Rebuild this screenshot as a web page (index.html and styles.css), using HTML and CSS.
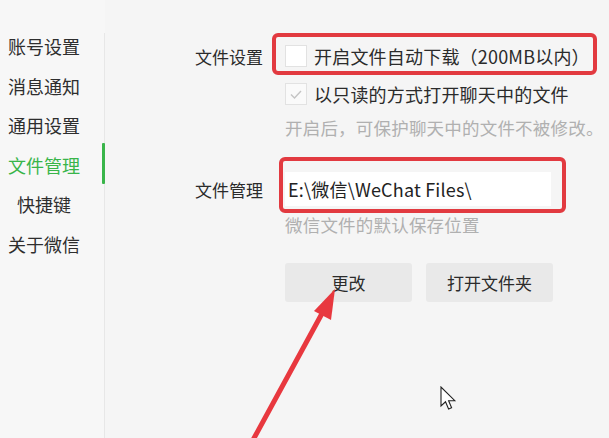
FILE: index.html
```html
<!DOCTYPE html>
<html lang="zh-CN">
<head>
<meta charset="utf-8">
<title>设置 - 文件管理</title>
<link rel="stylesheet" href="styles.css">
</head>
<body>
<div class="window">
  <nav class="sidebar">
    <div class="nav-item">账号设置</div>
    <div class="nav-item">消息通知</div>
    <div class="nav-item">通用设置</div>
    <div class="nav-item active">文件管理</div>
    <div class="nav-item">快捷键</div>
    <div class="nav-item">关于微信</div>
  </nav>
  <main class="main">
    <div class="row row-first">
      <div class="label">文件设置</div>
      <div class="option marked">
        <span class="check"></span>
        <span class="opt-text">开启文件自动下载（200MB以内）</span>
        <span class="mark mark-one"></span>
      </div>
    </div>
    <div class="row row-second">
      <div class="option">
        <span class="check checked"><svg viewBox="0 0 22 22" width="22" height="22"><path d="M6 11.5 L9.5 15 L16 8" fill="none" stroke="#c4c4c4" stroke-width="1.4"/></svg></span>
        <span class="opt-text">以只读的方式打开聊天中的文件</span>
      </div>
    </div>
    <div class="hint hint-one">开启后，可保护聊天中的文件不被修改。</div>
    <div class="row row-path">
      <div class="label">文件管理</div>
      <div class="path-box">
        <span class="path-text">E:\微信\WeChat Files\</span>
        <span class="mark mark-two"></span>
      </div>
    </div>
    <div class="hint hint-two">微信文件的默认保存位置</div>
    <div class="buttons">
      <button class="btn">更改</button>
      <button class="btn">打开文件夹</button>
    </div>
  </main>
  <svg class="arrow" width="609" height="438" viewBox="0 0 609 438">
    <line x1="253" y1="440" x2="325" y2="308" stroke="#e8383f" stroke-width="5" stroke-linecap="round"/>
    <polygon points="335,289 314,311 331,320" fill="#e8383f"/>
  </svg>
  <svg class="cursor" width="18" height="26" viewBox="0 0 18 26">
    <path d="M1 1 L1 20 L5.5 15.8 L8.6 23 L11.6 21.7 L8.6 14.7 L14.8 14.7 Z" fill="#fff" stroke="#222" stroke-width="1.1" stroke-linejoin="miter"/>
  </svg>
</div>
</body>
</html>
```
FILE: styles.css
```css
* { box-sizing: border-box; }
html, body { margin: 0; padding: 0; }
body {
  background: #f5f5f5;
  font-family: "Noto Sans CJK SC", "Noto Sans", sans-serif;
  color: #2b2b2b;
}
.window {
  position: relative;
  width: 609px;
  height: 438px;
  overflow: hidden;
  display: flex;
}
.sidebar {
  width: 105px;
  flex: none;
  background: linear-gradient(#e7e7e7, #e7e7e7) right 33px / 1px 100% no-repeat, #f7f7f7;
  padding-top: 27px;
}
.nav-item {
  position: relative;
  height: 39.6px;
  line-height: 39.6px;
  width: 104px;
  padding-right: 16px;
  text-align: center;
  font-size: 18px;
  color: #2e2e2e;
}
.nav-item.active { color: #39b54a; }
.nav-item.active::after {
  content: "";
  position: absolute;
  right: -1px;
  top: -3px;
  width: 3px;
  height: 41px;
  background: #39b54a;
  border-radius: 1px;
}
.main {
  flex: 1;
  padding: 37px 0 0 90px;
}
.row { display: flex; align-items: center; }
.label {
  width: 90px;
  flex: none;
  font-size: 17px;
  color: #2b2b2b;
}
.row-first { height: 38px; }
.row-second { height: 30px; margin-top: 4px; padding-left: 90px; }
.option {
  position: relative;
  display: flex;
  align-items: center;
  height: 100%;
}
.check {
  width: 22px;
  height: 22px;
  flex: none;
  background: #fff;
  border: 1px solid #e2e2e2;
  margin-right: 7px;
  display: flex;
}
.check.checked { background: #fafafa; }
.check svg { display: block; margin: -1px; }
.opt-text { font-size: 18px; letter-spacing: 0.2px; color: #2b2b2b; white-space: nowrap; }
.mark {
  position: absolute;
  border: 4px solid #e23a40;
  border-radius: 6px;
  pointer-events: none;
}
.mark-one { left: -13px; top: -4px; width: 325px; height: 42px; }
.hint {
  padding-left: 90px;
  height: 24px;
  line-height: 24px;
  font-size: 17.5px;
  letter-spacing: 0.2px;
  color: #b0b0b0;
  white-space: nowrap;
}
.hint-one { margin-top: 7px; }
.row-path { height: 34px; margin-top: 32px; }
.path-box {
  position: relative;
  width: 266px;
  height: 34px;
  background: #fff;
  display: flex;
  align-items: center;
  padding-left: 3px;
}
.path-text { font-size: 18px; color: #222; white-space: nowrap; letter-spacing: 0.2px; }
.mark-two { left: -6px; top: -15px; width: 287px; height: 56px; }
.hint-two { margin-top: 7px; }
.buttons {
  margin-top: 26px;
  padding-left: 90px;
  display: flex;
  gap: 14px;
}
.btn {
  width: 127px;
  height: 39px;
  border: none;
  border-radius: 3px;
  background: #e9e9e9;
  font-family: inherit;
  font-size: 17px;
  color: #2b2b2b;
  padding: 0;
}
.arrow { position: absolute; left: 0; top: 0; pointer-events: none; }
.cursor { position: absolute; left: 440px; top: 386px; }
```
